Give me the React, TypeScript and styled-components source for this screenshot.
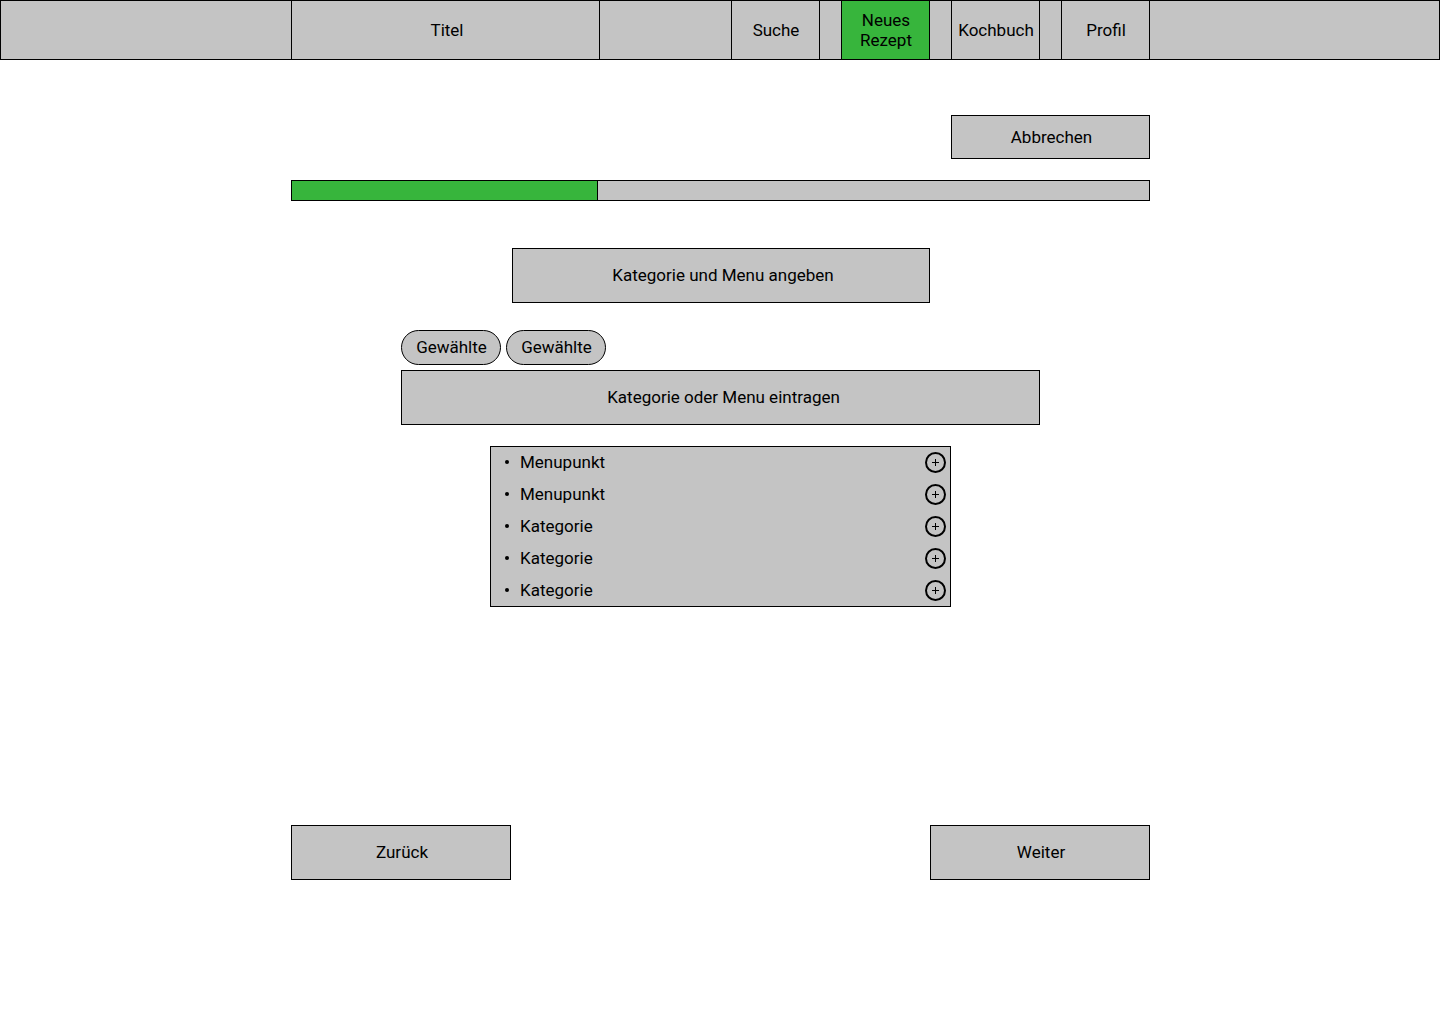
import React, { useState } from 'react';
import styled, { createGlobalStyle, css } from 'styled-components';

const grey = '#c4c4c4';
const green = '#37b53c';
const line = '1px solid #000';

const GlobalStyle = createGlobalStyle`
  *, *::before, *::after { box-sizing: border-box; }
  body {
    margin: 0;
    background: #fff;
    color: #000;
    font: 400 17px/20px Roboto, sans-serif;
  }
  button, input { font: inherit; color: inherit; }
`;

const centered = css`
  display: flex;
  align-items: center;
  justify-content: center;
  text-align: center;
`;

const Container = styled.div`
  width: 100%;
  max-width: 860px;
  margin: 0 auto;
  padding-left: 1px;
`;

const Header = styled.header`
  background: ${grey};
  border: ${line};
`;

const HeaderRow = styled(Container)`
  display: flex;
  justify-content: space-between;
`;

const Title = styled.div`
  ${centered}
  flex: 0 1 309px;
  min-height: 58px;
  padding-left: 3px;
  border-left: ${line};
  border-right: ${line};
`;

const Nav = styled.nav`
  display: flex;
  gap: 21px;
  border-left: ${line};
  border-right: ${line};
`;

const NavLink = styled.a<{ $active?: boolean; $first?: boolean; $last?: boolean }>`
  ${centered}
  width: ${(p) => (p.$first || p.$last ? 88 : 89)}px;
  padding-left: 1px;
  color: inherit;
  text-decoration: none;
  background: ${(p) => (p.$active ? green : grey)};
  border-left: ${(p) => (p.$first ? 'none' : line)};
  border-right: ${(p) => (p.$last ? 'none' : line)};
`;

const Page = styled(Container).attrs({ as: 'main' })`
  display: flex;
  flex-direction: column;
  align-items: center;
  padding-top: 55px;
  padding-bottom: 55px;
`;

const Button = styled.button<{ $compact?: boolean }>`
  ${centered}
  width: ${(p) => (p.$compact ? 199 : 220)}px;
  height: ${(p) => (p.$compact ? 44 : 55)}px;
  padding: ${(p) => (p.$compact ? '0 0 0 2px' : '0 0 1px 2px')};
  background: ${grey};
  border: ${line};
  cursor: pointer;
`;

const CancelRow = styled.div`
  display: flex;
  justify-content: flex-end;
  width: 100%;
`;

const Progress = styled.div`
  width: 100%;
  height: 21px;
  margin-top: 21px;
  background: ${grey};
  border: ${line};
`;

const ProgressFill = styled.div`
  height: 100%;
  background: ${green};
  border-right: ${line};
`;

const Heading = styled.h1`
  ${centered}
  width: 100%;
  max-width: 418px;
  min-height: 55px;
  margin: 47px 0 0;
  padding: 0 0 1px 5px;
  font: inherit;
  background: ${grey};
  border: ${line};
`;

const Picker = styled.div`
  width: 100%;
  max-width: 639px;
  margin-top: 27px;
`;

const Chips = styled.div`
  display: flex;
  gap: 5px;
  margin-bottom: 5px;
`;

const Chip = styled.button`
  ${centered}
  width: 100px;
  height: 35px;
  padding: 0 0 1px 1px;
  background: ${grey};
  border: ${line};
  border-radius: 18px;
  cursor: pointer;
`;

const EntryField = styled.input`
  display: block;
  width: 100%;
  height: 55px;
  padding: 0 0 1px 6px;
  text-align: center;
  background: ${grey};
  border: ${line};
  border-radius: 0;
  &::placeholder { color: #000; opacity: 1; }
`;

const Suggestions = styled.ul`
  display: flex;
  flex-direction: column;
  gap: 1px;
  width: 100%;
  max-width: 461px;
  margin: 21px 0 0;
  padding: 0;
  list-style: none;
  background: ${grey};
  border: ${line};
`;

const Suggestion = styled.li`
  display: flex;
  align-items: center;
  justify-content: space-between;
  height: 31px;
  padding: 0 4px 0 14px;
`;

const SuggestionName = styled.span`
  display: flex;
  align-items: center;
  gap: 11px;
  padding-bottom: 1px;
  &::before {
    content: '';
    width: 4px;
    height: 4px;
    border-radius: 50%;
    background: #000;
  }
`;

const AddButton = styled.button`
  ${centered}
  width: 21px;
  height: 21px;
  padding: 0;
  background: none;
  border: 2px solid #000;
  border-radius: 50%;
  cursor: pointer;
`;

const Pager = styled.div`
  display: flex;
  justify-content: space-between;
  width: 100%;
  margin-top: 218px;
`;

const navItems = ['Suche', 'Neues Rezept', 'Kochbuch', 'Profil'];
const suggestions = ['Menupunkt', 'Menupunkt', 'Kategorie', 'Kategorie', 'Kategorie'];
const step = 5;
const steps = 14;

export default function App() {
  const [entry, setEntry] = useState('');

  return (
    <>
      <GlobalStyle />
      <Header>
        <HeaderRow>
          <Title>Titel</Title>
          <Nav>
            {navItems.map((item, i) => (
              <NavLink
                key={item}
                href="#"
                $active={item === 'Neues Rezept'}
                $first={i === 0}
                $last={i === navItems.length - 1}
              >
                {item}
              </NavLink>
            ))}
          </Nav>
        </HeaderRow>
      </Header>
      <Page>
        <CancelRow>
          <Button type="button" $compact>Abbrechen</Button>
        </CancelRow>
        <Progress role="progressbar" aria-label="Fortschritt" aria-valuemin={0} aria-valuemax={steps} aria-valuenow={step}>
          <ProgressFill style={{ width: `${(step / steps) * 100}%` }} />
        </Progress>
        <Heading>Kategorie und Menu angeben</Heading>
        <Picker>
          <Chips>
            <Chip type="button">Gewählte</Chip>
            <Chip type="button">Gewählte</Chip>
          </Chips>
          <EntryField
            type="text"
            aria-label="Kategorie oder Menu eintragen"
            placeholder="Kategorie oder Menu eintragen"
            value={entry}
            onChange={(e) => setEntry(e.target.value)}
          />
        </Picker>
        <Suggestions>
          {suggestions.map((name, i) => (
            <Suggestion key={i}>
              <SuggestionName>{name}</SuggestionName>
              <AddButton type="button" aria-label={`${name} hinzufügen`}>
                <svg width="7" height="7" viewBox="0 0 7 7" stroke="#000" strokeWidth="1">
                  <path d="M3.5 0v7M0 3.5h7" />
                </svg>
              </AddButton>
            </Suggestion>
          ))}
        </Suggestions>
        <Pager>
          <Button type="button">Zurück</Button>
          <Button type="button">Weiter</Button>
        </Pager>
      </Page>
    </>
  );
}
